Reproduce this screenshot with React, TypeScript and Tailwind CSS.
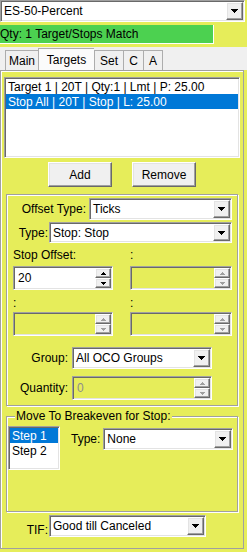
import React from "react";

const sunken =
  "border border-t-[#a0a0a0] border-l-[#a0a0a0] border-r-white border-b-white shadow-[inset_1px_1px_0_#696969,inset_-1px_-1px_0_#e3e3e3]";
const raised =
  "border border-t-white border-l-white border-r-[#696969] border-b-[#696969] shadow-[inset_-1px_-1px_0_#a0a0a0,inset_1px_1px_0_#e3e3e3]";

function DownArrow() {
  return (
    <svg width="7" height="4" viewBox="0 0 7 4" shapeRendering="crispEdges">
      <rect x="0" y="0" width="7" height="1" fill="#000" />
      <rect x="1" y="1" width="5" height="1" fill="#000" />
      <rect x="2" y="2" width="3" height="1" fill="#000" />
      <rect x="3" y="3" width="1" height="1" fill="#000" />
    </svg>
  );
}

function SpinArrow({ up, color }: { up?: boolean; color: string }) {
  return (
    <svg width="5" height="3" viewBox="0 0 5 3" shapeRendering="crispEdges">
      {up ? (
        <>
          <rect x="2" y="0" width="1" height="1" fill={color} />
          <rect x="1" y="1" width="3" height="1" fill={color} />
          <rect x="0" y="2" width="5" height="1" fill={color} />
        </>
      ) : (
        <>
          <rect x="0" y="0" width="5" height="1" fill={color} />
          <rect x="1" y="1" width="3" height="1" fill={color} />
          <rect x="2" y="2" width="1" height="1" fill={color} />
        </>
      )}
    </svg>
  );
}

function Combo({ text, className }: { text: string; className: string }) {
  return (
    <div className={`${sunken} bg-white flex p-[1px] ${className}`}>
      <span className="flex-1 flex items-center pl-[2px] whitespace-nowrap overflow-hidden">{text}</span>
      <div className={`${raised} bg-[#f0f0f0] w-[17px] h-full flex items-center justify-center`}>
        <DownArrow />
      </div>
    </div>
  );
}

function Spin({ value, disabled, className }: { value: string; disabled?: boolean; className: string }) {
  const arrow = disabled ? "#a0a0a0" : "#000";
  return (
    <div className={`${sunken} ${disabled ? "bg-transparent text-[#8d8d8d]" : "bg-white"} flex p-[1px] ${className}`}>
      <span className="flex-1 flex items-center pl-[3px]">{value}</span>
      <div className="w-[16px] h-full flex flex-col">
        <div className={`${raised} bg-[#f0f0f0] flex-1 flex items-center justify-center`}>
          <SpinArrow up color={arrow} />
        </div>
        <div className={`${raised} bg-[#f0f0f0] flex-1 flex items-center justify-center`}>
          <SpinArrow color={arrow} />
        </div>
      </div>
    </div>
  );
}

function Tab({ label, selected, className }: { label: string; selected?: boolean; className: string }) {
  return (
    <div
      className={`border-t border-l border-[#adadad] flex items-center justify-center ${
        selected ? "bg-[#fbfbfb] h-[22px]" : "bg-[#f0f0f0] h-[20px]"
      } ${className}`}
    >
      {label}
    </div>
  );
}

const etched = "border border-[#a0a0a0] shadow-[inset_1px_1px_0_white,1px_1px_0_white]";

export default function App() {
  return (
    <div className="w-[247px] h-[552px] bg-[#e6ed5a] flex flex-col overflow-hidden text-[12px] leading-[14px] text-black font-['Liberation_Sans',Arial,sans-serif]">
      <Combo text="ES-50-Percent" className="w-[245px] h-[22px] shrink-0" />

      <div className="mt-[3px] w-[214px] h-[19px] shrink-0 bg-[#4cd150] border-r border-b border-white flex items-center">
        Qty: 1 Target/Stops Match
      </div>

      <div className="mt-[3px] h-[23px] shrink-0 bg-[#f0f0f0] flex items-end pl-[5px]">
        <Tab label="Main" className="w-[33px]" />
        <Tab label="Targets" selected className="w-[56px]" />
        <Tab label="Set" className="w-[29px]" />
        <Tab label="C" className="w-[20px]" />
        <Tab label="A" className="w-[20px] border-r" />
      </div>

      <div className="w-[244px] h-[479px] shrink-0 border border-[#a0a0a0] shadow-[inset_1px_1px_0_white] flex flex-col">
        {/* target list */}
        <div className={`${sunken} bg-white ml-[3px] mt-[6px] w-[236px] h-[81px] p-[1px] flex flex-col`}>
          <div className="h-[15px] pl-[2px] flex items-center whitespace-nowrap">Target 1 | 20T | Qty:1 | Lmt | P: 25.00</div>
          <div className="h-[15px] pl-[2px] flex items-center whitespace-nowrap bg-[#0078d7] text-white">
            Stop All | 20T | Stop | L: 25.00
          </div>
        </div>

        <div className="mt-[4px] h-[25px] flex gap-[20px] pl-[47px]">
          <div className={`${raised} bg-[#f0f0f0] w-[64px] h-full flex items-center justify-center`}>Add</div>
          <div className={`${raised} bg-[#f0f0f0] w-[64px] h-full flex items-center justify-center`}>Remove</div>
        </div>

        {/* offset settings */}
        <div className={`${etched} mt-[7px] ml-[5px] w-[232px] h-[212px] flex flex-col`}>
          <div className="mt-[3px] h-[22px] flex items-center gap-[3px]">
            <span className="w-[79px] text-right">Offset Type:</span>
            <Combo text="Ticks" className="w-[143px] h-full" />
          </div>
          <div className="mt-[2px] h-[21px] flex items-center gap-[1px]">
            <span className="w-[41px] text-right">Type:</span>
            <Combo text="Stop: Stop" className="w-[183px] h-full" />
          </div>
          <div className="mt-[5px] h-[14px] flex pl-[6px]">
            <span className="w-[117px]">Stop Offset:</span>
            <span>:</span>
          </div>
          <div className="mt-[4px] h-[24px] flex pl-[6px] gap-[17px]">
            <Spin value="20" className="w-[100px] h-full" />
            <Spin value="" disabled className="w-[102px] h-full" />
          </div>
          <div className="mt-[6px] h-[14px] flex pl-[6px]">
            <span className="w-[117px]">:</span>
            <span>:</span>
          </div>
          <div className="mt-[2px] h-[24px] flex pl-[6px] gap-[17px]">
            <Spin value="" disabled className="w-[100px] h-full" />
            <Spin value="" disabled className="w-[102px] h-full" />
          </div>
          <div className="mt-[11px] h-[22px] flex items-center gap-[4px]">
            <span className="w-[61px] text-right">Group:</span>
            <Combo text="All OCO Groups" className="w-[140px] h-full" />
          </div>
          <div className="mt-[7px] h-[24px] flex items-center gap-[4px]">
            <span className="w-[61px] text-right">Quantity:</span>
            <Spin value="0" disabled className="w-[140px] h-full" />
          </div>
        </div>

        {/* breakeven */}
        <div className={`${etched} mt-[10px] ml-[5px] w-[232px] h-[96px] flex flex-col`}>
          <div className="-mt-[8px] ml-[8px] px-[1px] w-fit h-[14px] bg-[#e6ed5a] whitespace-nowrap">
            Move To Breakeven for Stop:
          </div>
          <div className="mt-[3px] flex items-start">
            <div className={`${sunken} bg-white ml-[1px] w-[52px] h-[44px] p-[1px] flex flex-col`}>
              <div className="h-[15px] pl-[2px] flex items-center bg-[#0078d7] text-white">Step 1</div>
              <div className="h-[15px] pl-[2px] flex items-center">Step 2</div>
            </div>
            <div className="mt-[2px] h-[22px] flex items-center gap-[3px] ml-[11px]">
              <span>Type:</span>
              <Combo text="None" className="w-[130px] h-full" />
            </div>
          </div>
        </div>

        <div className="mt-[3px] h-[22px] flex items-end gap-[1px]">
          <span className="w-[47px] text-right">TIF:</span>
          <Combo text="Good till Canceled" className="w-[157px] h-full" />
        </div>
      </div>
    </div>
  );
}
